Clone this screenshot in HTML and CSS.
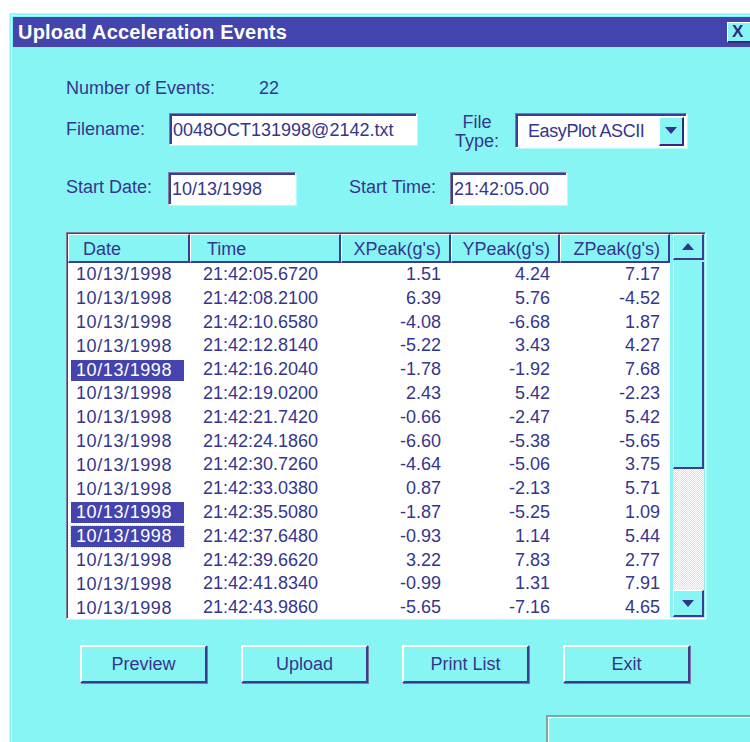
FILE: index.html
```html
<!DOCTYPE html>
<html>
<head>
<meta charset="utf-8">
<title>Upload Acceleration Events</title>
<link rel="stylesheet" href="styles.css">
</head>
<body>
<div class="window">
  <div class="titlebar">
    <span class="title">Upload Acceleration Events</span>
    <span class="close">X</span>
  </div>
  <div class="content">
    <div class="row row-count">
      <span class="lbl lbl-count">Number of Events:</span>
      <span class="count">22</span>
    </div>
    <div class="row row-file">
      <span class="lbl lbl-file">Filename:</span>
      <div class="field field-file">0048OCT131998@2142.txt</div>
      <span class="lbl lbl-type">File<br>Type:</span>
      <div class="combo">
        <span class="combo-text">EasyPlot ASCII</span>
        <span class="combo-btn"><svg width="12" height="7" viewBox="0 0 12 7"><path d="M0 0h12L6 7z" fill="#33338c"/></svg></span>
      </div>
    </div>
    <div class="row row-start">
      <span class="lbl lbl-date">Start Date:</span>
      <div class="field field-date">10/13/1998</div>
      <span class="lbl lbl-time">Start Time:</span>
      <div class="field field-time">21:42:05.00</div>
    </div>

    <div class="list">
      <div class="list-main">
        <div class="list-head">
          <div class="hcell h-date">Date</div>
          <div class="hcell h-time">Time</div>
          <div class="hcell num">XPeak(g's)</div>
          <div class="hcell num">YPeak(g's)</div>
          <div class="hcell num">ZPeak(g's)</div>
        </div>
        <div class="list-body" id="rows"></div>
      </div>
      <div class="scrollbar">
        <div class="sb-btn"><svg width="12" height="7" viewBox="0 0 12 7"><path d="M6 0L12 7H0z" fill="#33338c"/></svg></div>
        <div class="sb-thumb"></div>
        <div class="sb-track"></div>
        <div class="sb-btn sb-down"><svg width="12" height="7" viewBox="0 0 12 7"><path d="M0 0h12L6 7z" fill="#33338c"/></svg></div>
      </div>
    </div>

    <div class="buttons">
      <div class="btn">Preview</div>
      <div class="btn">Upload</div>
      <div class="btn">Print List</div>
      <div class="btn">Exit</div>
    </div>

    <div class="status"></div>
  </div>
</div>
<script src="app.js"></script>
</body>
</html>
```

FILE: app.js
```js
// Event records: time, x, y, z peaks and selection state
var events = [
  ["21:42:05.6720", "1.51", "4.24", "7.17"],
  ["21:42:08.2100", "6.39", "5.76", "-4.52"],
  ["21:42:10.6580", "-4.08", "-6.68", "1.87"],
  ["21:42:12.8140", "-5.22", "3.43", "4.27"],
  ["21:42:16.2040", "-1.78", "-1.92", "7.68", "sel"],
  ["21:42:19.0200", "2.43", "5.42", "-2.23"],
  ["21:42:21.7420", "-0.66", "-2.47", "5.42"],
  ["21:42:24.1860", "-6.60", "-5.38", "-5.65"],
  ["21:42:30.7260", "-4.64", "-5.06", "3.75"],
  ["21:42:33.0380", "0.87", "-2.13", "5.71"],
  ["21:42:35.5080", "-1.87", "-5.25", "1.09", "sel"],
  ["21:42:37.6480", "-0.93", "1.14", "5.44", "sel focus"],
  ["21:42:39.6620", "3.22", "7.83", "2.77"],
  ["21:42:41.8340", "-0.99", "1.31", "7.91"],
  ["21:42:43.9860", "-5.65", "-7.16", "4.65"]
];

var body = document.getElementById("rows");
events.forEach(function (e) {
  var row = document.createElement("div");
  row.className = "list-row";
  var cls = e[4] ? "date-text " + e[4] : "date-text";
  row.innerHTML =
    '<div class="cell c-date"><span class="' + cls + '">10/13/1998</span></div>' +
    '<div class="cell c-time">' + e[0] + '</div>' +
    '<div class="cell num">' + e[1] + '</div>' +
    '<div class="cell num">' + e[2] + '</div>' +
    '<div class="cell num">' + e[3] + '</div>';
  body.appendChild(row);
});
```

FILE: styles.css
```css
html, body {
  margin: 0;
  background: #fff;
  height: 742px;
  overflow: hidden;
}

body {
  font-family: "Liberation Sans", Arial, sans-serif;
  font-size: 18px;
  color: #35358e;
}

/* dialog window frame */
.window {
  box-sizing: border-box;
  margin: 13px 0 0 9px;
  width: 760px;
  height: 729px;
  padding: 4px 0 0 4px;
  background: #88f5f5;
  box-shadow: inset 1px 1px 0 #b4f9f9, inset 2px 2px 0 #88f5f5, inset 3px 3px 0 #ffffff;
}

.titlebar {
  height: 30px;
  background: #4444ae;
  display: flex;
  align-items: center;
  justify-content: space-between;
}

.title {
  color: #fff;
  font-weight: bold;
  font-size: 20px;
  padding-left: 5px;
  letter-spacing: 0.2px;
}

.close {
  box-sizing: border-box;
  width: 30px;
  height: 21px;
  margin-right: 12px;
  background: #88f5f5;
  border-top: 1px solid #fff;
  border-left: 1px solid #fff;
  border-bottom: 2px solid #2c2c7a;
  border-right: 2px solid #2c2c7a;
  color: #2c2c7a;
  font-weight: bold;
  font-size: 17px;
  line-height: 18px;
  padding-left: 4px;
}

.content {
  padding-left: 53px;
}

.row {
  display: flex;
  align-items: flex-start;
}

.lbl {
  white-space: nowrap;
}

.row-count {
  margin-top: 31px;
  height: 20px;
  line-height: 20px;
}

.lbl-count { width: 193px; }

.row-file {
  margin-top: 15px;
  height: 35px;
}

.lbl-file {
  width: 103px;
  line-height: 32px;
}

.lbl-type {
  width: 60px;
  margin-left: 30px;
  text-align: center;
  line-height: 19px;
}

/* sunken white edit field */
.field, .combo {
  box-sizing: border-box;
  background: #fff;
  border-top: 1px solid #7c7c9c;
  border-left: 1px solid #7c7c9c;
  border-bottom: 1px solid #fff;
  border-right: 1px solid #fff;
  box-shadow: inset 2px 2px 0 #3c3c90, 1px 1px 0 #b6fafa;
  white-space: nowrap;
}

.field {
  padding-left: 3px;
  padding-top: 2px;
}

.field-file {
  width: 248px;
  height: 32px;
  line-height: 28px;
}

.combo {
  width: 172px;
  height: 35px;
  margin-left: 8px;
  display: flex;
  align-items: center;
  justify-content: space-between;
  padding: 2px 2px 1px 12px;
}

.combo-text {
  letter-spacing: -0.4px;
}

.combo-btn {
  box-sizing: border-box;
  width: 25px;
  height: 29px;
  background: #88f5f5;
  border-top: 1px solid #fff;
  border-left: 1px solid #fff;
  border-bottom: 2px solid #2c2c7a;
  border-right: 2px solid #2c2c7a;
  display: flex;
  align-items: center;
  justify-content: center;
}

.row-start {
  margin-top: 24px;
  height: 33px;
}

.lbl-date {
  width: 102px;
  line-height: 30px;
}

.field-date {
  width: 128px;
  height: 33px;
  line-height: 29px;
}

.lbl-time {
  width: 101px;
  margin-left: 53px;
  line-height: 30px;
}

.field-time {
  width: 117px;
  height: 33px;
  line-height: 29px;
}

/* list view */
.list {
  box-sizing: border-box;
  margin-top: 27px;
  width: 640px;
  height: 387px;
  display: flex;
  background: #fff;
  border-top: 1px solid #7c7c9c;
  border-left: 1px solid #7c7c9c;
  border-bottom: 1px solid #fff;
  border-right: 1px solid #fff;
  box-shadow: inset 1px 1px 0 #3c3c90, 1px 1px 0 #b6fafa;
  padding: 1px 0 0 1px;
}

.list-main {
  width: 602px;
  overflow: hidden;
}

.list-head, .list-row {
  display: grid;
  grid-template-columns: 122px 151px 110px 109px 110px;
}

.list-head {
  height: 29px;
}

.hcell {
  box-sizing: border-box;
  background: #88f5f5;
  border-top: 1px solid #fff;
  border-left: 1px solid #fff;
  border-bottom: 2px solid #3c3c90;
  border-right: 2px solid #3c3c90;
  padding-top: 2px;
  line-height: 24px;
  white-space: nowrap;
}

.h-date { padding-left: 14px; }
.h-time { padding-left: 16px; }
.hcell.num { text-align: right; padding-right: 8px; }

.list-row {
  height: 23.8px;
  line-height: 23.8px;
}

.cell {
  white-space: nowrap;
}

.c-date {
  padding-left: 3px;
  display: flex;
  align-items: center;
}

.date-text {
  display: inline-block;
  box-sizing: border-box;
  width: 113px;
  height: 21px;
  line-height: 21px;
  padding-left: 5px;
  letter-spacing: 0.6px;
}

.date-text.sel {
  background: #4444ae;
  color: #fff;
}

.date-text.focus {
  outline: 1px dotted #e8e800;
  outline-offset: 0;
}

.c-time {
  padding-left: 13px;
}

.cell.num {
  text-align: right;
  padding-right: 10px;
}

/* vertical scroll bar */
.scrollbar {
  width: 35px;
  background: #88f5f5;
  display: flex;
  flex-direction: column;
  padding: 0 1px 0 3px;
  box-sizing: border-box;
}

.sb-btn {
  box-sizing: border-box;
  height: 26px;
  flex: none;
  background: #88f5f5;
  border-top: 1px solid #fff;
  border-left: 1px solid #fff;
  border-bottom: 2px solid #3c3c90;
  border-right: 2px solid #3c3c90;
  display: flex;
  align-items: center;
  justify-content: center;
}

.sb-thumb {
  box-sizing: border-box;
  margin-top: 2px;
  height: 207px;
  flex: none;
  border-left: 1px solid #fff;
  border-bottom: 2px solid #3c3c90;
  border-right: 2px solid #3c3c90;
  background: #88f5f5;
}

.sb-track {
  flex: 1;
  background-color: #fff;
  background-image: repeating-conic-gradient(#a8f8f8 0 25%, #fff 0 50%);
  background-size: 2px 2px;
}

.sb-down {
  height: 27px;
  margin-bottom: 1px;
}

/* command buttons */
.buttons {
  display: flex;
  gap: 34px;
  margin-top: 26px;
  padding-left: 14px;
}

.btn {
  box-sizing: border-box;
  width: 127px;
  height: 38px;
  background: #88f5f5;
  border-top: 2px solid #fff;
  border-left: 2px solid #fff;
  border-bottom: 2px solid #3c3c90;
  border-right: 2px solid #3c3c90;
  box-shadow: 1px 1px 0 #7c7c9c;
  text-align: center;
  line-height: 34px;
}

/* status area */
.status {
  box-sizing: border-box;
  margin-top: 32px;
  margin-left: 480px;
  width: 220px;
  height: 40px;
  border-top: 2px solid #7ea6a6;
  border-left: 2px solid #7ea6a6;
  box-shadow: inset 1px 1px 0 #fff;
}
```
